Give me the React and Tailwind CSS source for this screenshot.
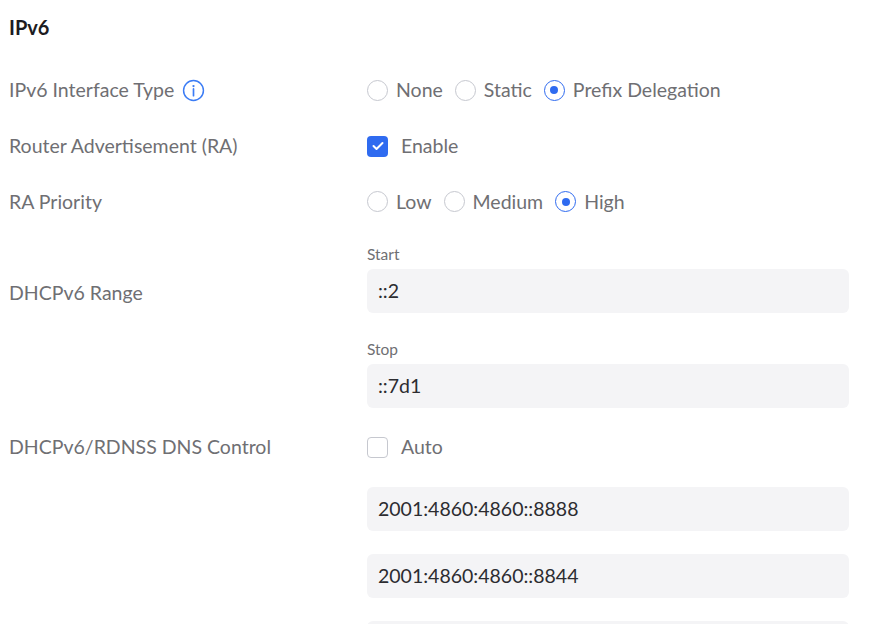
const font = { fontFamily: "Lato, 'Noto Sans', sans-serif" };

function Radio({ checked, label }) {
  return (
    <div className="flex items-center gap-2">
      <span className={`w-[21px] h-[21px] rounded-full border flex items-center justify-center bg-white ${checked ? "border-[#2f6bf0]" : "border-[#c6c8cf]"}`}>
        {checked && <span className="w-[8px] h-[8px] rounded-full bg-[#2f6bf0]" />}
      </span>
      <span>{label}</span>
    </div>
  );
}

function Check({ checked, label }) {
  return (
    <div className="flex items-center gap-[13px]">
      <span className={`w-[21px] h-[21px] rounded-[4px] flex items-center justify-center ${checked ? "bg-[#2f6bf0]" : "border border-[#c6c8cf] bg-white"}`}>
        {checked && (
          <svg width="12" height="10" viewBox="0 0 12 10"><path d="M1.5 5l3 3 6-6" stroke="white" strokeWidth="2" fill="none" strokeLinecap="round" strokeLinejoin="round" /></svg>
        )}
      </span>
      <span>{label}</span>
    </div>
  );
}

function Input({ value }) {
  return (
    <div className="w-[482px] h-[44px] rounded-[6px] bg-[#f4f4f6] flex items-center px-[11px] text-[#2c2c30]">{value}</div>
  );
}

export default function App() {
  return (
    <div style={font} className="w-[871px] h-[624px] overflow-hidden bg-white text-[19.5px] text-[#6f6f73]">
      <div className="h-[54px] flex items-center pl-[9px] text-[20px] font-bold text-[#1c1c1f]">IPv6</div>
      <div className="flex h-[56px] items-center mt-[8px]">
        <div className="w-[367px] pl-[9px] flex items-center gap-2">
          IPv6 Interface Type
          <svg width="23" height="23" viewBox="0 0 22 22"><circle cx="11" cy="11" r="9.5" fill="none" stroke="#3b7cf5" strokeWidth="1.4" /><circle cx="11" cy="6.8" r="1.1" fill="#3b7cf5" /><path d="M11 9.5v6.5" stroke="#3b7cf5" strokeWidth="1.6" strokeLinecap="round" /></svg>
        </div>
        <div className="flex items-center gap-[12px]">
          <Radio label="None" />
          <Radio label="Static" />
          <Radio checked label="Prefix Delegation" />
        </div>
      </div>
      <div className="flex h-[56px] items-center">
        <div className="w-[367px] pl-[9px]">Router Advertisement (RA)</div>
        <Check checked label="Enable" />
      </div>
      <div className="flex h-[55px] items-center">
        <div className="w-[367px] pl-[9px]">RA Priority</div>
        <div className="flex items-center gap-[12px]">
          <Radio label="Low" />
          <Radio label="Medium" />
          <Radio checked label="High" />
        </div>
      </div>
      <div className="flex">
        <div className="w-[367px] pl-[9px] h-[84px] pt-[49px]">DHCPv6 Range</div>
        <div className="flex flex-col">
          <div className="h-[20px] mt-[16px] mb-[4px] text-[15.5px] flex items-center">Start</div>
          <Input value="::2" />
          <div className="h-[20px] mt-[27px] mb-[4px] text-[15.5px] flex items-center">Stop</div>
          <Input value="::7d1" />
        </div>
      </div>
      <div className="flex h-[78px] items-center">
        <div className="w-[367px] pl-[9px]">DHCPv6/RDNSS DNS Control</div>
        <Check label="Auto" />
      </div>
      <div className="flex flex-col gap-[23px] pl-[367px] pt-[1px]">
        <Input value="2001:4860:4860::8888" />
        <Input value="2001:4860:4860::8844" />
        <Input value="" />
      </div>
    </div>
  );
}
